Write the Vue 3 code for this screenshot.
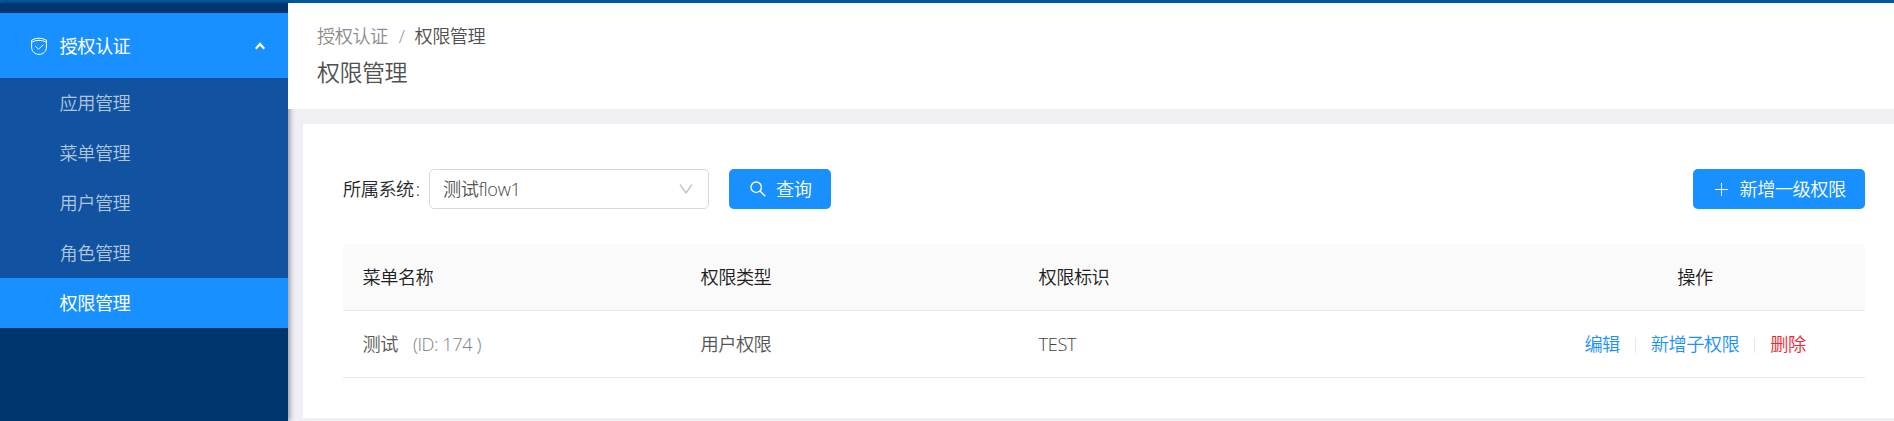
<script setup>
import { ref } from 'vue'

const menu = ['应用管理', '菜单管理', '用户管理', '角色管理', '权限管理']
const active = ref('权限管理')
const rows = [{ name: '测试', id: 174, type: '用户权限', key: 'TEST' }]
</script>

<template>
  <div class="page">
    <div class="topbar"></div>
    <div class="body">
      <aside class="sidebar">
        <div class="group">
          <svg class="shield" viewBox="0 0 16 18" fill="none" stroke="currentColor" stroke-width="1">
            <path d="M.6 3.2Q8-.9 15.4 3.2V10C15.4 15 11.6 17.4 8 17.4S.6 15 .6 10Z" />
            <path d="M.8 5.1Q8 1.5 15.2 5.1M4.2 9.1 7.5 12.2 12.4 7.7" />
          </svg>
          <span>授权认证</span>
          <svg class="caret" viewBox="0 0 10 8" fill="none" stroke="currentColor" stroke-width="2.2">
            <path d="M.8 6.8 5 2 9.2 6.8" />
          </svg>
        </div>
        <a
          v-for="item in menu"
          :key="item"
          class="item"
          :class="{ active: item === active }"
          @click="active = item"
        >{{ item }}</a>
      </aside>
      <main class="main">
        <header class="header">
          <div class="crumbs">
            <span>授权认证</span><span class="sep">/</span><span class="current">权限管理</span>
          </div>
          <h1 class="title">权限管理</h1>
        </header>
        <section class="card">
          <div class="toolbar">
            <label class="label">所属系统<span class="colon">:</span></label>
            <div class="select">
              <span>测试<span class="latin">flow1</span></span>
              <svg class="arrow" viewBox="0 0 14 10" fill="none" stroke="currentColor" stroke-width="1.4">
                <path d="M1 .6 7 8.8 13 .6" />
              </svg>
            </div>
            <button class="btn search">
              <svg width="16" height="16" viewBox="0 0 16 16" fill="none" stroke="currentColor" stroke-width="1.4">
                <circle cx="6.2" cy="6.2" r="5.2" />
                <path d="M10 10 15.3 15.3" />
              </svg>
              <span>查询</span>
            </button>
            <button class="btn add">
              <svg width="13" height="13" viewBox="0 0 13 13" stroke="currentColor" stroke-width="1">
                <path d="M6.5 0V13M0 6.5H13" />
              </svg>
              <span>新增一级权限</span>
            </button>
          </div>
          <div class="table">
            <div class="row head">
              <div>菜单名称</div><div>权限类型</div><div>权限标识</div><div class="ops">操作</div>
            </div>
            <div v-for="r in rows" :key="r.id" class="row">
              <div>{{ r.name }}<span class="id">(ID: {{ r.id }} )</span></div>
              <div>{{ r.type }}</div>
              <div class="latin">{{ r.key }}</div>
              <div class="ops">
                <a>编辑</a><i></i><a>新增子权限</a><i></i><a class="danger">删除</a>
              </div>
            </div>
          </div>
        </section>
      </main>
    </div>
  </div>
</template>

<style>
body { margin: 0; overflow: hidden; }
</style>

<style scoped>
.page {
  height: 421px;
  display: flex;
  flex-direction: column;
  overflow: hidden;
  background: #f0eff4;
  color: #555;
  font: 350 18.2px/26px "Open Sans", "Noto Sans CJK SC", sans-serif;
  letter-spacing: -.5px;
}
.topbar { height: 3px; flex: none; background: #005aa3; }
.body { flex: 1; display: flex; min-height: 0; }
.sidebar {
  width: 288px;
  flex: none;
  box-sizing: border-box;
  padding-top: 10px;
  background: #00356e;
  box-shadow: 2px 0 5px rgba(0, 10, 20, .38);
}
.group {
  height: 65px;
  display: flex;
  align-items: center;
  padding: 0 23px 0 31px;
  background: #1890ff;
  color: #fff;
  font-weight: 400;
}
.shield { width: 16px; height: 18px; margin-right: 12.5px; }
.caret { width: 10px; height: 8px; margin-left: auto; }
.item {
  display: block;
  height: 50px;
  line-height: 50px;
  padding-left: 59.5px;
  background: #1153a1;
  color: #b0c6de;
}
.item.active { background: #1890ff; color: #fff; font-weight: 400; }
.main { flex: 1; display: flex; flex-direction: column; position: relative; min-width: 0; }
.header {
  height: 106px;
  flex: none;
  box-sizing: border-box;
  padding: 20px 29px 0;
  background: #fff;
  position: relative;
}
.crumbs { color: #8c8c8c; }
.sep { margin: 0 10px 0 11px; }
.current { color: #505050; }
.title { margin: 6px 0 0; font-size: 23px; line-height: 34px; font-weight: 350; color: #505050; }
.card {
  height: 294px;
  box-sizing: border-box;
  margin: 15px 0 0 15px;
  padding: 45px 29px 0 40px;
  background: #fff;
}
.toolbar { display: flex; height: 40px; align-items: center; color: #262626; }
.label { width: 86px; white-space: nowrap; }
.colon { margin-left: 2px; }
.latin { color: #444; letter-spacing: -.3px; }
.select {
  width: 280px;
  height: 40px;
  box-sizing: border-box;
  display: flex;
  align-items: center;
  justify-content: space-between;
  padding: 0 15px 0 13px;
  border: 1px solid #d9d9d9;
  border-radius: 5px;
  color: #555;
}
.arrow { width: 14px; height: 10px; color: #bfbfbf; }
.btn {
  height: 40px;
  display: flex;
  align-items: center;
  padding: 0;
  border: 0;
  border-radius: 5px;
  background: #1890ff;
  box-shadow: 0 2px 0 rgba(0, 0, 0, .03);
  color: #fff;
  font: inherit;
  letter-spacing: inherit;
}
.search { width: 102px; margin-left: 20px; padding-left: 21px; gap: 10px; }
.add { width: 172px; margin-left: auto; padding-left: 22px; gap: 11.5px; }
.table { margin-top: 35px; }
.row {
  display: grid;
  grid-template-columns: 338px 338px 508px 338px;
  height: 67px;
  box-sizing: border-box;
  align-items: center;
  border-bottom: 1px solid #e8e8e8;
}
.row > div { padding-left: 19.5px; }
.head { background: #fafafa; color: #202020; border-radius: 5px 5px 0 0; }
.id { margin-left: 15px; color: #808080; letter-spacing: -.4px; }
.row > .ops { display: flex; justify-content: center; align-items: center; padding: 0 2px 0 0; color: #1890ff; }
.head > .ops { color: #202020; }
.ops i { width: 1px; height: 15px; margin: 2px 15px 0; background: #e8e8e8; }
.ops .danger { color: #f5222d; }
</style>
